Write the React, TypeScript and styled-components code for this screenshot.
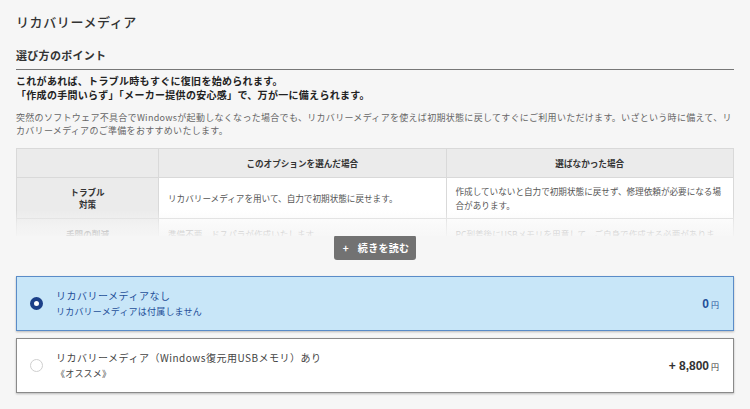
import styled, { createGlobalStyle } from "styled-components";

const GlobalStyle = createGlobalStyle`
  html, body {
    margin: 0;
    padding: 0;
    background: #f6f6f6;
  }
  body {
    font-family: "Noto Sans CJK JP", "Noto Sans", sans-serif;
    color: #333;
  }
`;

const Page = styled.div`
  padding: 12px 16px 16px;
  width: 750px;
  box-sizing: border-box;
`;

const Title = styled.h1`
  margin: 0;
  font-size: 13px;
  line-height: 20px;
  font-weight: 500;
  letter-spacing: 0.6px;
  color: #333;
`;

const SectionHeading = styled.h2`
  margin: 15px 0 0;
  padding-bottom: 6px;
  font-size: 11px;
  line-height: 16px;
  font-weight: 700;
  letter-spacing: 0.3px;
  color: #333;
  border-bottom: 1.5px solid #777;
`;

const Lead = styled.p`
  margin: 4px 0 0;
  font-size: 10px;
  line-height: 14px;
  font-weight: 700;
  letter-spacing: 0.3px;
  color: #222;
`;

const Body = styled.p`
  margin: 9px 0 0;
  font-size: 9px;
  line-height: 13px;
  letter-spacing: 0.3px;
  color: #666;
`;

const TableClip = styled.div`
  position: relative;
  margin-top: 11px;
  height: 88px;
  overflow: hidden;
`;

const Fade = styled.div`
  position: absolute;
  left: 0;
  right: 0;
  bottom: 0;
  height: 26px;
  background: linear-gradient(
    to bottom,
    rgba(246, 246, 246, 0) 0%,
    rgba(246, 246, 246, 0.6) 55%,
    rgba(246, 246, 246, 0.9) 100%
  );
`;

const Table = styled.table`
  width: 100%;
  border-collapse: collapse;
  table-layout: fixed;
  font-size: 8.6px;
`;

const HeadCell = styled.th`
  height: 28px;
  padding: 0 9px;
  background: #ebebeb;
  border: 1px solid #d9d9d9;
  font-weight: 700;
  color: #333;
  text-align: center;
`;

const RowHead = styled.th<{ $top?: boolean }>`
  height: 40px;
  padding: ${(p) => (p.$top ? "8px 9px 0" : "0 9px")};
  background: #ebebeb;
  border: 1px solid #d9d9d9;
  font-weight: 700;
  color: #333;
  line-height: ${(p) => (p.$top ? "14px" : "12px")};
  text-align: center;
  vertical-align: ${(p) => (p.$top ? "top" : "middle")};
`;

const Cell = styled.td<{ $top?: boolean }>`
  padding: ${(p) => (p.$top ? "8px 9px 0" : "0 9px")};
  background: #fff;
  border: 1px solid #d9d9d9;
  color: #555;
  line-height: 14px;
  vertical-align: ${(p) => (p.$top ? "top" : "middle")};
`;

const MoreRow = styled.div`
  display: flex;
  justify-content: center;
  margin-top: -1px;
`;

const MoreButton = styled.button`
  display: flex;
  align-items: center;
  gap: 9px;
  height: 25px;
  padding: 0 7px 0 9px;
  border: none;
  border-radius: 3px;
  background: #727272;
  color: #fff;
  font-family: inherit;
  font-size: 10px;
  font-weight: 700;
  letter-spacing: 0.3px;
  cursor: pointer;
`;

const Options = styled.div`
  display: flex;
  flex-direction: column;
  gap: 7px;
  margin-top: 16px;
`;

const Option = styled.label<{ $active?: boolean }>`
  display: flex;
  align-items: center;
  height: 55px;
  padding: 0 14px 0 12px;
  box-sizing: border-box;
  border: 1px solid ${(p) => (p.$active ? "#5a8cc8" : "#8a8a8a")};
  background: ${(p) => (p.$active ? "#c8e6f8" : "#fff")};
  box-shadow: 0 1px 2px rgba(0, 0, 0, 0.25);
  color: ${(p) => (p.$active ? "#1f4f99" : "#444")};
  cursor: pointer;
`;

const Radio = styled.span<{ $checked?: boolean }>`
  flex-shrink: 0;
  width: 13px;
  height: 13px;
  border-radius: 50%;
  box-sizing: border-box;
  margin-left: 1px;
  border: ${(p) => (p.$checked ? "4px solid #1c3f88" : "1px solid #cfcfcf")};
  background: #fff;
`;

const OptionText = styled.div`
  flex: 1;
  margin-left: 13px;
`;

const OptionName = styled.div`
  font-size: 10px;
  line-height: 16px;
  letter-spacing: 0.5px;
`;

const OptionNote = styled.div`
  font-size: 9px;
  line-height: 15px;
  letter-spacing: 0.2px;
`;

const Price = styled.div<{ $active?: boolean }>`
  display: flex;
  align-items: baseline;
  gap: 2px;
  font-family: "Liberation Sans", Arial, sans-serif;
  font-weight: 700;
  font-size: 12px;
  color: ${(p) => (p.$active ? "#1f4f99" : "#333")};
`;

const Yen = styled.span`
  font-family: "Noto Sans CJK JP", sans-serif;
  font-weight: 400;
  font-size: 8px;
`;

const options = [
  {
    name: "リカバリーメディアなし",
    note: "リカバリーメディアは付属しません",
    price: "0",
    active: true,
  },
  {
    name: "リカバリーメディア（Windows復元用USBメモリ）あり",
    note: "《オススメ》",
    price: "+ 8,800",
    active: false,
  },
];

export default function App() {
  return (
    <>
      <GlobalStyle />
      <Page>
        <Title>リカバリーメディア</Title>
        <SectionHeading>選び方のポイント</SectionHeading>
        <Lead>
          これがあれば、トラブル時もすぐに復旧を始められます。
          <br />
          「作成の手間いらず」「メーカー提供の安心感」で、万が一に備えられます。
        </Lead>
        <Body>
          突然のソフトウェア不具合でWindowsが起動しなくなった場合でも、リカバリーメディアを使えば初期状態に戻してすぐにご利用いただけます。いざという時に備えて、リカバリーメディアのご準備をおすすめいたします。
        </Body>

        <TableClip>
          <Table>
            <colgroup>
              <col style={{ width: "142px" }} />
              <col />
              <col />
            </colgroup>
            <thead>
              <tr>
                <HeadCell />
                <HeadCell>このオプションを選んだ場合</HeadCell>
                <HeadCell>選ばなかった場合</HeadCell>
              </tr>
            </thead>
            <tbody>
              <tr>
                <RowHead>
                  トラブル
                  <br />
                  対策
                </RowHead>
                <Cell>リカバリーメディアを用いて、自力で初期状態に戻せます。</Cell>
                <Cell>
                  作成していないと自力で初期状態に戻せず、修理依頼が必要になる場合があります。
                </Cell>
              </tr>
              <tr>
                <RowHead $top>手間の削減</RowHead>
                <Cell $top>準備不要、ドスパラが作成いたします。</Cell>
                <Cell $top>
                  PC到着後にUSBメモリを用意して、ご自身で作成する必要があります。
                </Cell>
              </tr>
            </tbody>
          </Table>
          <Fade />
        </TableClip>

        <MoreRow>
          <MoreButton type="button">
            <span>+</span>
            <span>続きを読む</span>
          </MoreButton>
        </MoreRow>

        <Options>
          {options.map((o) => (
            <Option key={o.name} $active={o.active}>
              <Radio $checked={o.active} />
              <OptionText>
                <OptionName>{o.name}</OptionName>
                <OptionNote>{o.note}</OptionNote>
              </OptionText>
              <Price $active={o.active}>
                {o.price}
                <Yen>円</Yen>
              </Price>
            </Option>
          ))}
        </Options>
      </Page>
    </>
  );
}
